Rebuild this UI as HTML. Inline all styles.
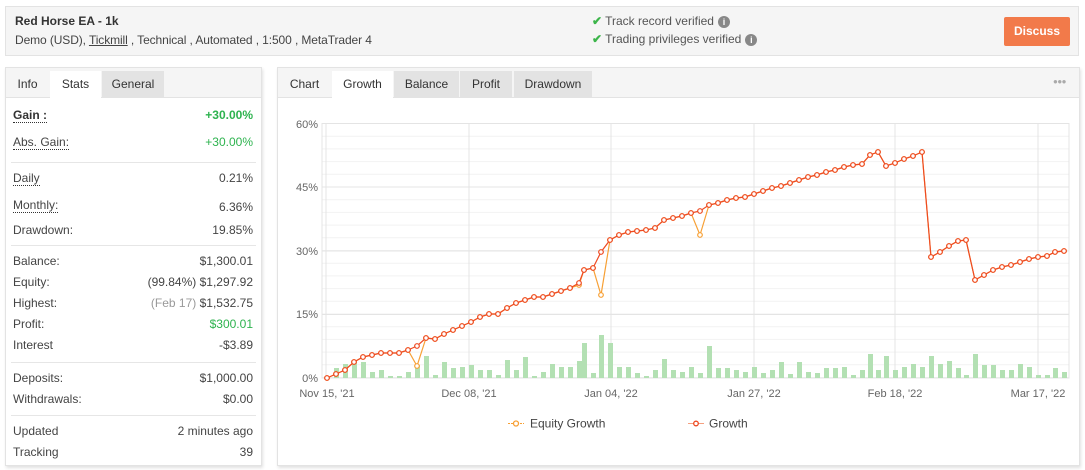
<!DOCTYPE html>
<html><head><meta charset="utf-8"><style>
*{box-sizing:border-box;margin:0;padding:0}
body{width:1085px;height:470px;background:#fff;font-family:"Liberation Sans",Arial,sans-serif;font-size:12px;color:#444;position:relative;overflow:hidden}
.hdr{position:absolute;left:5px;top:6px;width:1074px;height:50px;background:#f5f5f5;border:1px solid #e3e3e3}
.hdr .t{position:absolute;left:9px;top:7px;font-weight:bold;font-size:12px;color:#333}
.hdr .s{position:absolute;left:9px;top:26px;font-size:12px;color:#444;letter-spacing:-0.1px}
.ver{position:absolute;left:586px;font-size:12px;color:#555}
.ver .ck{color:#3cb54a;font-weight:bold;margin-right:3px}
.info{display:inline-block;width:12px;height:12px;border-radius:50%;background:#888;color:#fff;font-size:9px;text-align:center;line-height:12px;font-weight:bold;vertical-align:0px;margin-left:4px}
.btn{position:absolute;left:998px;top:10px;width:66px;height:29px;background:#f27a4a;color:#fff;font-weight:bold;font-size:12px;text-align:center;line-height:29px;border-radius:2px}
.panel{position:absolute;background:#fff;border:1px solid #e3e3e3;box-shadow:1px 2px 3px rgba(0,0,0,.12)}
.tabs{position:absolute;left:0;top:0;right:0;height:30px;background:#f5f5f5;border-bottom:1px solid #e3e3e3}
.tab{position:absolute;top:3px;height:27px;line-height:27px;text-align:center;font-size:12px;color:#333}
.tab.a{background:#fff;height:28px}
.tab.g{background:#e3e3e3}
.row{position:absolute;left:7px;right:8px;font-size:12px;color:#444}
.row .r{position:absolute;right:0;top:0}
.dot{border-bottom:1px dotted #333}
.sep{position:absolute;left:5px;right:5px;height:1px;background:#e6e6e6}
.gr{color:#2eb34f}
.gy{color:#999}
</style></head><body>
<div class="hdr">
<div class="t">Red Horse EA - 1k</div>
<div class="s">Demo (USD), <span style="text-decoration:underline">Tickmill</span> , Technical , Automated , 1:500 , MetaTrader 4</div>
<div class="ver" style="top:7px"><span class="ck">✔</span>Track record verified<span class="info">i</span></div>
<div class="ver" style="top:25px"><span class="ck">✔</span>Trading privileges verified<span class="info">i</span></div>
<div class="btn">Discuss</div>
</div>

<div class="panel" style="left:5px;top:67px;width:257px;height:399px">
<div class="tabs">
<div class="tab" style="left:0;width:43px">Info</div>
<div class="tab a" style="left:44px;width:51px">Stats</div>
<div class="tab g" style="left:96px;width:62px">General</div>
</div>
<div class="row" style="top:40px"><b class="dot" style="color:#333">Gain :</b><b class="r gr">+30.00%</b></div>
<div class="row" style="top:67px"><span class="dot">Abs. Gain:</span><span class="r gr">+30.00%</span></div>
<div class="sep" style="top:94px"></div>
<div class="row" style="top:103px"><span class="dot">Daily</span><span class="r">0.21%</span></div>
<div class="row" style="top:130px"><span class="dot">Monthly:</span><span class="r" style="top:2px">6.36%</span></div>
<div class="row" style="top:155px">Drawdown:<span class="r">19.85%</span></div>
<div class="sep" style="top:177px"></div>
<div class="row" style="top:186px">Balance:<span class="r">$1,300.01</span></div>
<div class="row" style="top:207px">Equity:<span class="r">(99.84%) $1,297.92</span></div>
<div class="row" style="top:228px">Highest:<span class="r"><span class="gy">(Feb 17)</span> $1,532.75</span></div>
<div class="row" style="top:249px">Profit:<span class="r gr">$300.01</span></div>
<div class="row" style="top:270px">Interest<span class="r">-$3.89</span></div>
<div class="sep" style="top:294px"></div>
<div class="row" style="top:303px">Deposits:<span class="r">$1,000.00</span></div>
<div class="row" style="top:324px">Withdrawals:<span class="r">$0.00</span></div>
<div class="sep" style="top:347px"></div>
<div class="row" style="top:356px">Updated<span class="r">2 minutes ago</span></div>
<div class="row" style="top:377px">Tracking<span class="r">39</span></div>
</div>

<div class="panel" style="left:277px;top:67px;width:803px;height:399px">
<div class="tabs">
<div class="tab" style="left:0;width:53px">Chart</div>
<div class="tab a" style="left:54px;width:61px">Growth</div>
<div class="tab g" style="left:116px;width:65px">Balance</div>
<div class="tab g" style="left:182px;width:52px">Profit</div>
<div class="tab g" style="left:236px;width:78px">Drawdown</div>
<div style="position:absolute;right:13px;top:9px;color:#aaa;font-size:8px;letter-spacing:-0.5px">●●●</div>
</div>
</div>

<svg id="c" width="1085" height="470" style="position:absolute;left:0;top:0" font-family="Liberation Sans, Arial, sans-serif" font-size="11"></svg>
<script>
var s='';
for(var y=123.5;y<=378;y+=12.7){s+='<line x1="322" x2="1069" y1="'+y+'" y2="'+y+'" stroke="#f2f2f2"/>';}
[123.5,187,251,314.5,378].forEach(function(y){s+='<line x1="322" x2="1069" y1="'+y+'" y2="'+y+'" stroke="#e4e4e4"/>';});
[326,469,611,754,895,1038].forEach(function(x){s+='<line x1="'+x+'" x2="'+x+'" y1="123" y2="378" stroke="#e4e4e4"/>';});
s+='<rect x="322" y="123.5" width="747" height="254.5" fill="none" stroke="#e4e4e4"/>';
[['60%',128],['45%',191],['30%',255],['15%',318],['0%',382]].forEach(function(a){s+='<text x="318" y="'+a[1]+'" text-anchor="end" fill="#666">'+a[0]+'</text>';});
[["Nov 15, '21",327],["Dec 08, '21",469],["Jan 04, '22",611],["Jan 27, '22",754],["Feb 18, '22",895],["Mar 17, '22",1038]].forEach(function(a){s+='<text x="'+a[1]+'" y="397" text-anchor="middle" fill="#666">'+a[0]+'</text>';});
var g=[[327,378],[336,374],[345,370],[354,362],[363,357],[372,355],[381,353],[390,353],[399,353],[408,350],[417,346],[426,338],[435,339],[444,334],[453,330],[462,326],[471,322],[480,317],[489,314],[498,314],[507,308],[516,303],[525,300],[534,297],[543,297],[552,294],[561,291],[570,288],[579,283],[584,270],[593,268],[601,252],[610,240],[619,235],[628,232],[637,231],[646,230],[655,228],[664,220],[673,218],[682,216],[691,213],[700,211],[709,205],[718,203],[727,200],[736,198],[745,197],[754,194],[763,191],[772,188],[781,186],[790,183],[799,180],[808,177],[817,175],[826,172],[835,170],[844,167],[853,165],[862,164],[870,155],[878,152],[886,166],[895,163],[904,159],[913,156],[922,152],[931,257],[940,252],[949,246],[958,241],[966,240],[975,280],[984,275],[993,270],[1002,267],[1011,265],[1020,262],[1029,259],[1038,257],[1047,256],[1055,252],[1064,251]];
var bh={336:10,345:14,354:18,363:16,372:6,381:8,390:2,399:2,408:6,417:13,426:22,435:3,444:16,453:10,462:11,471:13,480:8,489:8,498:3,507:18,516:8,525:21,534:2,543:6,552:14,561:11,570:11,579:17,584:35,593:5,601:43,610:35,619:11,628:11,637:5,646:2,655:8,664:19,673:8,682:6,691:11,700:5,709:32,718:10,727:10,736:8,745:6,754:11,763:5,772:8,781:16,790:4,799:16,808:6,817:5,826:10,835:10,844:11,853:3,862:8,870:24,878:8,886:22,895:8,904:11,913:14,922:11,931:22,940:14,949:17,958:10,966:3,975:24,984:13,993:13,1002:8,1011:8,1020:14,1029:11,1038:3,1047:3,1055:10,1064:6};
g.forEach(function(p){var h=bh[p[0]]||0;if(h)s+='<rect x="'+(p[0]-2)+'" y="'+(378-h)+'" width="5" height="'+h+'" fill="#b3e0b3"/>';});
var e=g.map(function(p){var y=p[1];if(p[0]==417)y=366;if(p[0]==601)y=295;if(p[0]==700)y=235;if(p[0]==579)y=285;return [p[0],y];});
function line(pts,c){var d=pts.map(function(p){return p.join(',')}).join(' ');var r='<polyline points="'+d+'" fill="none" stroke="'+c+'" stroke-width="1.2"/>';pts.forEach(function(p){r+='<circle cx="'+p[0]+'" cy="'+p[1]+'" r="2.3" fill="#fff" stroke="'+c+'" stroke-width="1.2"/>';});return r;}
s+=line(e,'#f7a035');s+=line(g,'#ee4a22');
s+='<line x1="508" x2="524" y1="423.5" y2="423.5" stroke="#f7a035" stroke-dasharray="2,1"/><circle cx="516" cy="423.5" r="2.5" fill="#fff" stroke="#f7a035" stroke-width="1.3"/><text x="530" y="427.5" fill="#444" font-size="12">Equity Growth</text>';
s+='<line x1="688" x2="704" y1="423.5" y2="423.5" stroke="#f5a080"/><circle cx="696" cy="423.5" r="2.3" fill="#fff" stroke="#ee4a22" stroke-width="1.3"/><text x="709" y="427.5" fill="#444" font-size="12">Growth</text>';
document.getElementById('c').innerHTML=s;
</script>
</body></html>
